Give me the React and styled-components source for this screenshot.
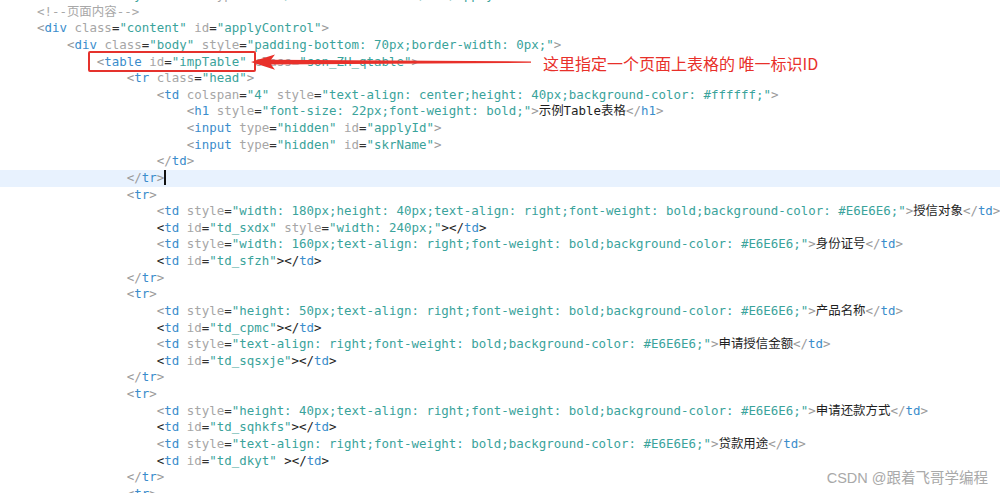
import React from "react";
import styled, { createGlobalStyle } from "styled-components";

const GlobalStyle = createGlobalStyle`
  html, body {
    margin: 0;
    padding: 0;
    background: #ffffff;
  }
`;

const Editor = styled.div`
  position: relative;
  width: 1000px;
  height: 493px;
  overflow: hidden;
  background: #ffffff;
`;

const Code = styled.div`
  margin-top: -13px;
  font-family: "DejaVu Sans Mono", "Noto Sans CJK SC", monospace;
  font-size: 12.45px;
  line-height: 16.64px;
`;

const CodeLine = styled.div`
  height: 16.64px;
  padding-left: 7px;
  white-space: pre;
  background: ${(p) => (p.$active ? "#e8f2fe" : "transparent")};
`;

const Tok = styled.span`
  color: ${(p) =>
    ({
      punct: "#9a9a9a",
      dark: "#1c1c1c",
      tag: "#3a8dcc",
      attr: "#a6a6a6",
      eq: "#333333",
      value: "#3aa39b",
      text: "#1e1e1e",
      comment: "#a8a8a8",
      plain: "#1e1e1e",
    }[p.$kind])};
`;

const Caret = styled.span`
  display: inline-block;
  width: 1.5px;
  height: 15px;
  background: #111;
  vertical-align: -3px;
`;

const Marker = styled.div`
  position: absolute;
  left: 88px;
  top: 51px;
  width: 164px;
  height: 17px;
  border: 2px solid #e5322d;
  border-radius: 2px;
`;

const Arrow = styled.svg`
  position: absolute;
  left: 250px;
  top: 52px;
`;

const Note = styled.div`
  position: absolute;
  left: 543px;
  top: 53px;
  font-family: "Noto Sans CJK SC", "Noto Sans", sans-serif;
  font-size: 16px;
  line-height: 20px;
  color: #e8302a;
  white-space: pre;
`;

const Watermark = styled.div`
  position: absolute;
  right: 12px;
  bottom: 6px;
  font-family: "Liberation Sans", "Noto Sans CJK SC", sans-serif;
  font-size: 14.5px;
  color: #a9a9a9;
  white-space: pre;
`;

const I = (n) => " ".repeat(n * 4);

const lines = [
  { src: I(1) + '<link rel="stylesheet" type="text/css" href="static/css/apply.css">' },
  { src: I(1) + "<!--页面内容-->" },
  { src: I(1) + '<div class="content" id="applyControl">' },
  { src: I(2) + '<div class="body" style="padding-bottom: 70px;border-width: 0px;">' },
  { src: I(3) + '<table id="impTable" class="son_ZH_qtable">' },
  { src: I(4) + '<tr class="head">' },
  { src: I(5) + '<td colspan="4" style="text-align: center;height: 40px;background-color: #ffffff;">' },
  { src: I(6) + '<h1 style="font-size: 22px;font-weight: bold;">示例Table表格</h1>' },
  { src: I(6) + '<input type="hidden" id="applyId">' },
  { src: I(6) + '<input type="hidden" id="skrName">' },
  { src: I(5) + "</td>" },
  { src: I(4) + "</tr>", active: true },
  { src: I(4) + "<tr>" },
  { src: I(5) + '<td style="width: 180px;height: 40px;text-align: right;font-weight: bold;background-color: #E6E6E6;">授信对象</td>' },
  { src: I(5) + '<td id="td_sxdx" style="width: 240px;"></td>', dark: true },
  { src: I(5) + '<td style="width: 160px;text-align: right;font-weight: bold;background-color: #E6E6E6;">身份证号</td>' },
  { src: I(5) + '<td id="td_sfzh"></td>', dark: true },
  { src: I(4) + "</tr>" },
  { src: I(4) + "<tr>" },
  { src: I(5) + '<td style="height: 50px;text-align: right;font-weight: bold;background-color: #E6E6E6;">产品名称</td>' },
  { src: I(5) + '<td id="td_cpmc"></td>', dark: true },
  { src: I(5) + '<td style="text-align: right;font-weight: bold;background-color: #E6E6E6;">申请授信金额</td>' },
  { src: I(5) + '<td id="td_sqsxje"></td>', dark: true },
  { src: I(4) + "</tr>" },
  { src: I(4) + "<tr>" },
  { src: I(5) + '<td style="height: 40px;text-align: right;font-weight: bold;background-color: #E6E6E6;">申请还款方式</td>' },
  { src: I(5) + '<td id="td_sqhkfs"></td>', dark: true },
  { src: I(5) + '<td style="text-align: right;font-weight: bold;background-color: #E6E6E6;">贷款用途</td>' },
  { src: I(5) + '<td id="td_dkyt" ></td>', dark: true },
  { src: I(4) + "</tr>" },
  { src: I(4) + "<tr>" },
];

// tiny html highlighter
const tokenize = (src, dark) => {
  const re = /<!--[\s\S]*?-->|<\/?|\/?>|"[^"]*"|=|\s+|[^\s<>="]+/g;
  const out = [];
  let inTag = false;
  let wantTag = false;
  const p = dark ? "dark" : "punct";
  for (const m of src.match(re) || []) {
    if (m.startsWith("<!--")) out.push(["comment", m]);
    else if (m === "<" || m === "</") {
      inTag = true;
      wantTag = true;
      out.push([p, m]);
    } else if (m === ">" || m === "/>") {
      inTag = false;
      out.push([p, m]);
    } else if (/^\s+$/.test(m)) out.push(["plain", m]);
    else if (!inTag) out.push(["text", m]);
    else if (wantTag) {
      wantTag = false;
      out.push(["tag", m]);
    } else if (m === "=") out.push(["eq", m]);
    else if (m.startsWith('"')) out.push(["value", m]);
    else out.push(["attr", m]);
  }
  return out;
};

const App = () => (
  <Editor>
    <GlobalStyle />
    <Code>
      {lines.map((l, i) => (
        <CodeLine key={i} $active={l.active}>
          {tokenize(l.src, l.dark).map(([k, t], j) => (
            <Tok key={j} $kind={k}>
              {t}
            </Tok>
          ))}
          {l.active && <Caret />}
        </CodeLine>
      ))}
    </Code>

    <Marker />
    <Arrow width="290" height="22" viewBox="0 0 290 22">
      <path d="M1 10 L25 2.5 L21 7.8 L281 9.4 L281 10.8 L21 12.6 L25 17.8 Z" fill="#e8302a" />
    </Arrow>
    <Note>这里指定一个页面上表格的 唯一标识ID</Note>
    <Watermark>CSDN @跟着飞哥学编程</Watermark>
  </Editor>
);

export default App;
